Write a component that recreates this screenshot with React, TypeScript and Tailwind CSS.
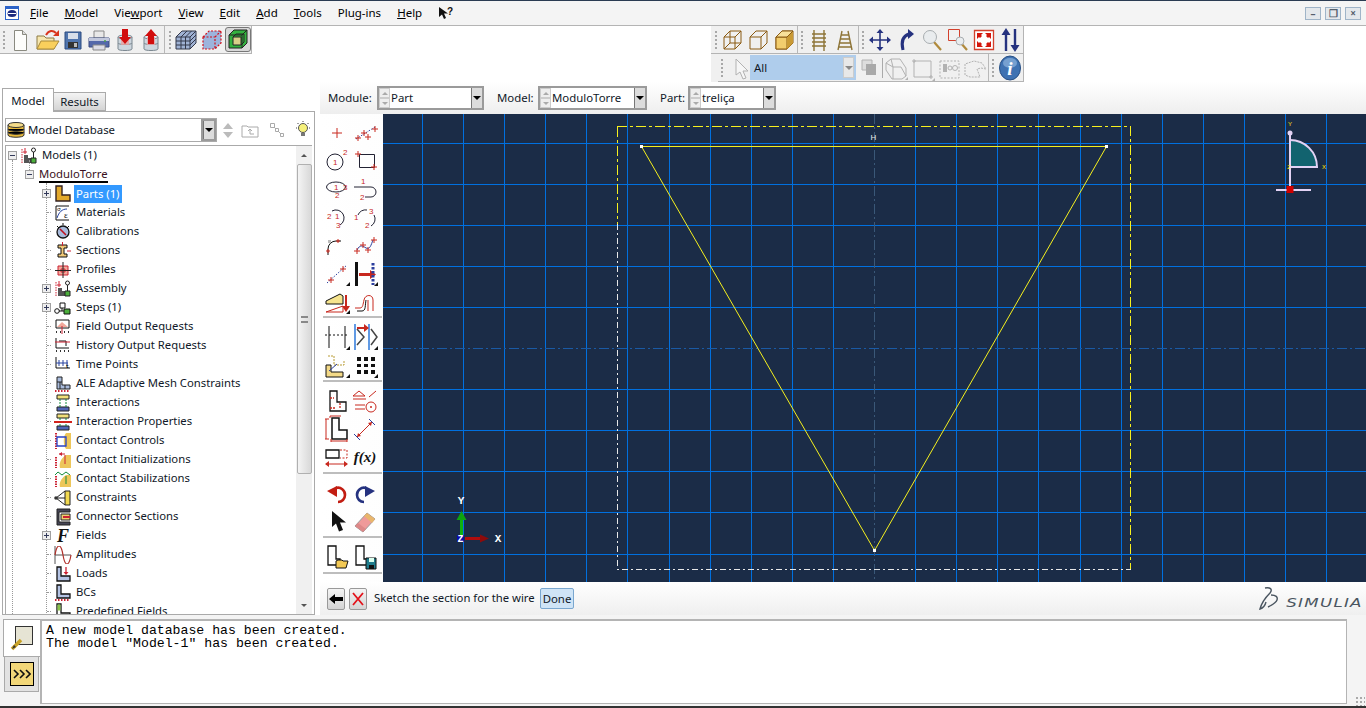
import type { ReactNode } from 'react';

const uiFont = { fontFamily: '"Noto Sans", sans-serif' };

function Ico({ s = 26, children }: { s?: number; children: ReactNode }) {
  return (
    <svg width={s} height={s} viewBox={`0 0 ${s} ${s}`} className="block shrink-0" fill="none">
      {children}
    </svg>
  );
}

function Grip() {
  return <div className="h-[18px] w-0 shrink-0 border-l-[2px] border-dotted border-[#a8a8a8]" />;
}

function Sep() {
  return <div className="h-full w-px shrink-0 bg-[#b8b8b8]" />;
}

function Num({ x, y, t, c = '#c8281e' }: { x: number; y: number; t: string; c?: string }) {
  return (
    <text x={x} y={y} fontSize="8" fill={c} fontFamily="Liberation Sans, sans-serif">
      {t}
    </text>
  );
}

function Plus({ x, y, c = '#c8281e', r = 3 }: { x: number; y: number; c?: string; r?: number }) {
  return <path d={`M${x - r} ${y}h${r * 2}M${x} ${y - r}v${r * 2}`} stroke={c} />;
}

function Corner() {
  return <path d="M27 27h-4l4-4z" fill="#111" />;
}

/* ---------- top toolbar icons ---------- */
const NewFile = () => (
  <Ico>
    <path d="M6.5 3.5h8l4 4v16h-12z" fill="#fdfdfb" stroke="#8a8a80" />
    <path d="M14.5 3.5v4h4" fill="#ddd" stroke="#8a8a80" />
  </Ico>
);
const OpenFile = () => (
  <Ico>
    <path d="M3 22V9h7l2 2h8v11z" fill="#f6e7b0" stroke="#8c7a45" />
    <path d="M3 22l4-8h18l-5 8z" fill="#f9cf5c" stroke="#a98a3a" />
    <path d="M12 8c3-5 7-5 10-2" stroke="#d9351d" strokeWidth="2" />
    <path d="M25 3v6h-6z" fill="#d9351d" />
  </Ico>
);
const SaveFile = () => (
  <Ico>
    <path d="M5 5h16v17H5z" fill="#4f74ad" stroke="#2b4a80" />
    <path d="M8 6h10v6H8z" fill="#d8dfea" />
    <path d="M8 15h10v6H8z" fill="#333" />
    <path d="M14 16h3v4h-3z" fill="#bbb" />
  </Ico>
);
const PrintFile = () => (
  <Ico>
    <path d="M8 4h10v7H8z" fill="#e8e8e8" stroke="#888" />
    <path d="M3 11h20v9H3z" fill="#5468aa" stroke="#3a4a80" />
    <path d="M3 11h20v3H3z" fill="#c2c8dd" />
    <path d="M7 18h12v5H7z" fill="#dcdce6" stroke="#888" />
    <circle cx="19" cy="14" r="1" fill="#4ca04c" />
  </Ico>
);
const DbArrow = ({ up }: { up?: boolean }) => (
  <Ico>
    <path d="M6 10v12c0 2 14 2 14 0V10z" fill="#cdd6de" stroke="#7b8790" />
    <ellipse cx="13" cy="10" rx="7" ry="2" fill="#e4e9ee" stroke="#7b8790" />
    <path d="M6 16c0 2 14 2 14 0" stroke="#7b8790" />
    <path d="M9 10h8v8H9z" fill="#e9a3a3" opacity=".8" />
    {up ? <path d="M13 2l6 7h-3v8h-6V9H7z" fill="#d10d0d" /> : <path d="M10 2h6v8h3l-6 7-6-7h3z" fill="#d10d0d" />}
  </Ico>
);
const MeshCube = () => (
  <Ico>
    <path d="M3 10l6-6h14v12l-6 6H3z" fill="#9fb2d4" stroke="#33384a" />
    <path d="M3 10h14v12M17 10l6-6M8 10v12M12.5 10v12M3 14h14M3 18h14M8 10l6-6M12.5 10l6-6M17 14l6-6M17 18l6-6" stroke="#33384a" />
  </Ico>
);
const RedCube = () => (
  <Ico>
    <path d="M4 10l6-6h12v12l-6 6H4z" fill="#9db4dc" />
    <path d="M4 10l6-6h12v12l-6 6H4zM4 10h12v12M16 10l6-6" stroke="#d3111b" strokeWidth="1.2" strokeDasharray="2 1.5" />
  </Ico>
);
const GreenCube = () => (
  <Ico>
    <path d="M4 9l5-5h13v13l-5 5H4z" fill="#33b13f" stroke="#222" />
    <path d="M8 11h8v8H8z" fill="#d8d089" stroke="#222" />
    <path d="M4 9h13v13M17 9l5-5M8 11l3-3h8v8l-3 3" stroke="#222" />
  </Ico>
);

/* ---------- view toolbar icons ---------- */
const brown = '#8a5a12';
const WireCube = () => (
  <Ico>
    <path d="M5 10l6-6h11v12l-6 6H5zM5 10h11v12M16 10l6-6M11 4v12h11M11 16l-6 6" stroke={brown} />
  </Ico>
);
const HiddenCube = () => (
  <Ico>
    <path d="M5 10l6-6h11v12l-6 6H5zM5 10h11v12M16 10l6-6" stroke={brown} />
  </Ico>
);
const SolidCube = () => (
  <Ico>
    <path d="M5 10l6-6h11v12l-6 6H5z" fill="#f3cd68" stroke={brown} />
    <path d="M5 10h11v12H5z" fill="#f2cd6e" stroke={brown} />
    <path d="M16 10l6-6v12l-6 6z" fill="#c99a35" />
    <path d="M5 10l6-6h11l-6 6z" fill="#f8e09a" stroke={brown} />
  </Ico>
);
const Ladder = ({ tapered }: { tapered?: boolean }) => (
  <Ico>
    {tapered ? (
      <path d="M10 4L6 23M16 4l4 19M9 8h8M8 12h10M7.5 16h11M6 20h14" stroke="#8d7437" strokeWidth="1.4" />
    ) : (
      <path d="M8 3v21M18 3v21M6 7h14M6 11h14M6 15h14M6 19h14" stroke="#8d7437" strokeWidth="1.4" />
    )}
  </Ico>
);
const navy = '#25327f';
const PanIcon = () => (
  <Ico>
    <path d="M13 4v18M4 13h18" stroke={navy} strokeWidth="1.6" />
    <path d="M13 2l3.5 4h-7zM13 24l3.5-4h-7zM2 13l4-3.5v7zM24 13l-4-3.5v7z" fill={navy} />
  </Ico>
);
const RotateIcon = () => (
  <Ico>
    <path d="M10 23C8 15 10 9 16 7" stroke={navy} strokeWidth="3" />
    <path d="M15 2l6 5-6 5z" fill={navy} />
  </Ico>
);
const ZoomIcon = ({ box }: { box?: boolean }) => (
  <Ico>
    {box && <path d="M3.5 2.5h11v11h-11z" stroke="#d3402c" />}
    <path d="M15 15l7 8" stroke="#b08a3c" strokeWidth="2.2" />
    <circle cx={box ? 15 : 11} cy={box ? 14 : 10} r={box ? 4 : 6.5} fill="#e9ecee" stroke="#a8adb0" />
  </Ico>
);
const FitIcon = () => (
  <Ico>
    <path d="M3.5 3.5h19v19h-19z" fill="#fff" stroke="#d3402c" strokeWidth="1.3" />
    <path d="M6 6l6 0-2 2 1 1-2 2-1-1-2 2zM20 6v6l-2-2-1 1-2-2 1-1-2-2zM6 20v-6l2 2 1-1 2 2-1 1 2 2zM20 20h-6l2-2-1-1 2-2 1 1 2-2z" fill="#d4160c" />
  </Ico>
);
const CycleIcon = () => (
  <Ico>
    <path d="M9 6v18M18 2v18" stroke={navy} strokeWidth="2.4" />
    <path d="M9 1l4.5 7h-9zM18 25l-4.5-7h9z" fill={navy} />
  </Ico>
);
const g = '#b2b2b2';
const ArrowGhost = () => (
  <Ico>
    <path d="M8 4v16l4-3 3 7 3-1-3-7h5z" fill="#f6f6f6" stroke={g} />
  </Ico>
);
const GhostLayers = () => (
  <Ico>
    <path d="M6 5h10v10H6z" fill="#ddd" stroke={g} />
    <path d="M10 9h10v11H10z" fill="#a9a9a9" />
  </Ico>
);
const GhostCube = () => (
  <Ico>
    <path d="M3 8l5-4h9l6 9v8l-4 3H9l-6-9z" stroke={g} />
    <path d="M8 4l2 8h8l5 9M10 12l-7-4M10 12v12" stroke={g} />
    <path d="M25 25h-3l3-3z" fill={g} />
  </Ico>
);
const GhostRect = () => (
  <Ico>
    <path d="M5 6h17v16H5z" stroke={g} />
    <path d="M3 6h4M5 4v4M20 22h4M22 20v4" stroke={g} />
    <path d="M26 26h-3l3-3z" fill={g} />
  </Ico>
);
const GhostNodes = () => (
  <Ico>
    <path d="M4 6h19v17H4z" stroke={g} strokeDasharray="2 1.5" />
    <path d="M7 9h4v8H7z" fill={g} />
    <circle cx="14" cy="13" r="2" stroke={g} />
    <circle cx="19" cy="13" r="2.5" stroke={g} />
  </Ico>
);
const GhostHand = () => (
  <Ico>
    <path d="M3 20V9l9-3 8 2 4 6-5-1-4 1 3 8H8z" stroke={g} strokeDasharray="2 1" />
  </Ico>
);
const InfoIcon = () => (
  <Ico>
    <ellipse cx="13" cy="13" rx="10.5" ry="12" fill="#3f72b2" stroke="#274f84" />
    <ellipse cx="13" cy="8" rx="7" ry="5" fill="#8fb4dd" opacity=".7" />
    <text x="13" y="20" textAnchor="middle" fontSize="19" fontStyle="italic" fontWeight="700" fill="#fff" fontFamily="Liberation Serif, serif">
      i
    </text>
  </Ico>
);
const SmallCursor = () => (
  <svg width="16" height="14" viewBox="0 0 16 14" className="block">
    <path d="M1 1v10l3-2.5 2 4.5 2-1-2-4.5h4z" fill="#111" />
    <text x="9" y="9" fontSize="10" fontWeight="700" fill="#111" fontFamily="Liberation Sans, sans-serif">
      ?
    </text>
  </svg>
);

/* ---------- toolbox icons ---------- */
const T = ({ children }: { children: ReactNode }) => <Ico s={28}>{children}</Ico>;
const cr = '#c8281e';
const bk = '#111';
const bl = '#2c3f9e';

const toolbox: ReactNode[][] = [
  [
    <T key="a"><Plus x={14} y={14} r={5} /></T>,
    <T key="b"><path d="M5 20L24 8" stroke={bl} strokeDasharray="1.5 1.5" /><Plus x={7} y={19} /><Plus x={13} y={14} /><Plus x={17} y={18} /><Plus x={24} y={10} /></T>,
    <T key="c"><circle cx="12" cy="15" r="8" stroke="#223" /><Num x={10} y={18} t="1" /><Num x={20} y={8} t="2" /></T>,
    <T key="d"><path d="M8.5 7.5h15v13h-15z" stroke="#223" /><Plus x={7} y={7} /><Plus x={23} y={20} /></T>,
    <T key="e"><ellipse cx="13" cy="12" rx="9.5" ry="5" stroke="#223" /><Num x={11} y={15} t="1" /><Num x={20} y={15} t="3" /><Num x={12} y={23} t="2" /></T>,
    <T key="f"><path d="M3 12h17a5 5 0 0 1 0 10h-6" stroke="#223" /><Num x={10} y={9} t="1" /><Num x={9} y={25} t="2" /></T>,
    <T key="g"><path d="M9 8a8 8 0 1 1 8 14" stroke="#223" /><Num x={4} y={16} t="2" /><Num x={12} y={16} t="1" /><Num x={13} y={25} t="3" /></T>,
    <T key="h"><path d="M7 12a8 8 0 0 1 9-5M23 12a8 8 0 0 1-3 11" stroke="#223" /><Num x={3} y={17} t="1" /><Num x={18} y={11} t="3" /><Num x={14} y={25} t="2" /></T>,
    <T key="i"><path d="M5 24v-6a8 8 0 0 1 8-8h5" stroke={bk} /><path d="M5 9h3v3H5z" fill="#bbb" /><Plus x={15} y={10} r={2} /><Plus x={5} y={20} r={2} /></T>,
    <T key="j"><path d="M6 19c3-6 6-4 9-2 4 2 5-3 7-8" stroke={bl} /><Plus x={6} y={20} /><Plus x={12} y={14} /><Plus x={17} y={19} /><Plus x={23} y={9} /></T>,
    <T key="k"><path d="M4 24L24 6" stroke={bl} strokeDasharray="1.5 1.5" /><Plus x={8} y={21} /><Plus x={20} y={10} /><Corner /></T>,
    <T key="l"><path d="M4 3h3v24H4z" fill={bk} /><path d="M8 15h11v-3l6 4.5-6 4.5v-3H8z" transform="translate(0 -1)" fill={cr} /><path d="M22 4v22" stroke={bl} strokeWidth="3" strokeDasharray="2.5 1.5" /><Corner /></T>,
    <T key="m"><path d="M3 14l14-7 3 2v8H3z" fill="#f6e48e" stroke={bk} /><path d="M3 25l17-6v6z" stroke={cr} /><path d="M23 8v14" stroke={cr} strokeWidth="2" /><path d="M19 19h8l-4 6z" fill={cr} /><Corner /></T>,
    <T key="n"><path d="M4 21h5c3 0 3-4 4-8 1-6 9-6 9 0v11M17 13v11" stroke={cr} /><path d="M6 24h5c4 0 3-6 4-11" stroke={bk} /></T>,
  ],
  [
    <T key="a"><path d="M2 12h24" stroke={bk} strokeDasharray="2 2" /><path d="M6 3v22M22 3v22" stroke={bk} /><Corner /></T>,
    <T key="b"><path d="M4 1v26M18 1v26" stroke="#1e6fd9" strokeWidth="1.4" /><path d="M6 6l7 8-7 8M20 6l6 8-6 8" stroke="#444" strokeWidth="1.5" /><path d="M6 4h7V1l5 4-5 4V6H6z" fill={cr} /><Corner /></T>,
    <T key="c"><path d="M5 5h6v9h10v-5" stroke="#b89b35" strokeDasharray="2 1" /><path d="M3 14h5v7h12v5H3z" fill="#f3d987" stroke={bk} /><path d="M6 20l8-7" stroke={bl} /><Corner /></T>,
    <T key="d"><path d="M6 6h4v4H6zM13 6h4v4h-4zM20 6h4v4h-4zM6 13h4v3H6zM13 13h4v3h-4zM20 13h4v3h-4zM6 19h4v4H6zM13 19h4v4h-4zM20 19h4v4h-4z" fill={bk} /><Corner /></T>,
  ],
  [
    <T key="a"><path d="M7 4h7v11h9v9H7z" stroke={bk} strokeWidth="1.3" /><path d="M7 11h4M7 21h5M17 21v-6" stroke={cr} strokeWidth="1.3" strokeDasharray="2 1" /></T>,
    <T key="b"><path d="M2 9l6-5 6 5z" stroke={cr} /><path d="M2 12h13M4 18h10M4 22h10" stroke={cr} /><circle cx="20" cy="20" r="5" stroke={cr} /><circle cx="20" cy="20" r="1" fill={cr} /><path d="M18 10l7-6" stroke={cr} /></T>,
    <T key="c"><path d="M9 3h7v12h8v9H9z" stroke={bk} strokeWidth="1.5" /><path d="M3 4v20M7 1v2M2 4h4M2 24h4M8 26h16M8 24v3M24 24v3M7 1h11" stroke={cr} /></T>,
    <T key="d"><path d="M6 22L21 7" stroke={cr} /><path d="M3 19l6 6M18 4l6 6" stroke={bl} /><path d="M6 22l1-4 3 3zM21 7l-1 4-3-3z" fill={cr} /></T>,
    <T key="e"><path d="M3 7h13v8H3z" stroke={bk} strokeWidth="1.3" /><path d="M17 7h7v8h-7" stroke={cr} strokeDasharray="2 1.5" /><path d="M3 21h21" stroke={cr} /><path d="M2 21l4-3v6zM25 21l-4-3v6z" fill={cr} /></T>,
    <T key="f"><text x="14" y="19" textAnchor="middle" fontSize="15" fontStyle="italic" fontWeight="700" fill={bk} fontFamily="Liberation Serif, serif">f(x)</text></T>,
  ],
  [
    <T key="a"><path d="M13 9a7 7 0 0 1 9 7c0 4-3 7-7 7" stroke="#c21d12" strokeWidth="2.6" /><path d="M4 12l10-5v11z" fill="#c21d12" /></T>,
    <T key="b"><path d="M15 9a7 7 0 0 0-9 7c0 4 3 7 7 7" stroke={navy} strokeWidth="2.6" /><path d="M24 12L14 7v11z" fill={navy} /></T>,
    <T key="c"><path d="M9 4v16l4-3.5 3 8 4-1.5-3-7.5h6z" fill={bk} /></T>,
    <T key="d"><path d="M4 19L16 6l8 6-12 13z" fill="#ef9a9a" stroke="#999" /><path d="M13 9l3-3 8 6-3 4z" fill="#e9b66c" /><path d="M4 19l8 6 3-3-8-6z" fill="#d88" /></T>,
  ],
  [
    <T key="a"><path d="M5 3h8v13h4v6H5z" stroke={bk} strokeWidth="1.3" fill="#fff" /><path d="M13 25v-7l2-1h4l1 1h5l-2 7z" fill="#f3c955" stroke={bk} /></T>,
    <T key="b"><path d="M5 3h8v13h4v6H5z" stroke={bk} strokeWidth="1.3" fill="#fff" /><path d="M15 15h10v11H15z" fill="#1f7c8c" stroke={bk} /><path d="M18 15h5v4h-5z" fill="#dfe" /><path d="M18 22h5v4h-5z" fill="#111" /></T>,
  ],
  [
    <T key="a"><path d="M7 6h7v14h8" stroke={bk} strokeWidth="1.3" /></T>,
    <T key="b"><path d="M5 7h20M5 7v12h20V7M10 7v12M15 7v12M20 7v12" stroke={bl} /></T>,
  ],
];

/* ---------- tree icons ---------- */
const I = ({ children }: { children: ReactNode }) => (
  <svg width="18" height="18" viewBox="0 0 18 18" className="block shrink-0" fill="none">
    {children}
  </svg>
);
const Hatch = () => <path d="M1 16h14" stroke="#c23" strokeWidth="2" strokeDasharray="1.5 1.5" />;
const ModelIco = () => (
  <I>
    <path d="M2 2v14" stroke="#c23" strokeDasharray="1.5 1" />
    <path d="M4 8h4v8H4zM8 11h3v5H8z" fill="#555" />
    <path d="M11 11h5v5h-5z" fill="#4caf3c" stroke="#222" />
    <circle cx="13.5" cy="3" r="2" fill="#fff" stroke="#222" />
    <path d="M13.5 5v6" stroke="#222" />
    <path d="M5 1v6M3 5h4" stroke="#c23" />
  </I>
);
const treeIcons: Record<string, ReactNode> = {
  Models: <ModelIco />,
  Parts: <I><path d="M2 1h6v9h8v6H2z" fill="#e3a92c" stroke="#322" strokeWidth="1.4" /></I>,
  Materials: <I><path d="M2 2h13M2 2v14h13" stroke="#111" /><path d="M3 14C5 8 8 5 13 5" stroke="#2743a0" /><text x="10" y="14" fontSize="9" fill="#111" fontFamily="Liberation Serif, serif">ε</text><text x="3" y="7" fontSize="6" fill="#111">σ</text></I>,
  Calibrations: <I><circle cx="9" cy="9" r="6" fill="#a9bbdc" stroke="#111" strokeWidth="1.3" /><path d="M6 6l6 6" stroke="#c1121f" strokeWidth="1.6" /><path d="M3 3l2 2M15 3l-2 2M9 0v2" stroke="#111" /></I>,
  Sections: <I><path d="M4 3h9v3h-3v6h3v3H4v-3h3V6H4z" fill="#f0c878" stroke="#111" /><path d="M8.5 0v4M13 9h4" stroke="#c23" /></I>,
  Profiles: <I><path d="M4 5h10v9H4z" fill="#f2a99c" stroke="#c23" /><path d="M7 8h4v3H7z" stroke="#c23" /><path d="M9 1v16M1 9.5h16" stroke="#222" /></I>,
  Assembly: <ModelIco />,
  Steps: <I><circle cx="3" cy="12" r="2.3" fill="#fff" stroke="#111" /><path d="M5 12h5" stroke="#111" /><path d="M6 4h5v5H6z" fill="#fff" stroke="#111" /><path d="M10 10h6v5h-6z" fill="#4caf3c" stroke="#111" /><path d="M8 9v3" stroke="#111" /></I>,
  Field: <I><path d="M2 2h13v8H2z" stroke="#111" /><path d="M3 9l5-5 6 5z" fill="#f2a99c" /><path d="M2 14h2M6 14h2M10 14h2M14 14h2" stroke="#333" strokeWidth="2" strokeDasharray="1 1" /><path d="M8 8v8" stroke="#c23" /></I>,
  History: <I><path d="M2 1v10h13" stroke="#111" /><path d="M5 4h7v5" stroke="#111" /><path d="M1 5h15" stroke="#c23" /><path d="M2 14h2M6 14h2M10 14h2M14 14h2" stroke="#333" strokeWidth="2" strokeDasharray="1 1" /></I>,
  Time: <I><path d="M2 1v11h14" stroke="#111" /><path d="M2 7h12M5 4v6M9 4v6M13 4v6" stroke="#2743a0" /><text x="12" y="12" fontSize="6" fontWeight="700" fill="#111">t</text></I>,
  ALE: <I><path d="M3 2h5v8h8v4H3z" fill="#a9bbdc" stroke="#222" /><path d="M6 7v7M11 10v4M3 7h5" stroke="#222" /><Hatch /></I>,
  Interactions: <I><path d="M3 1h12v4H3z" fill="#f2e07a" stroke="#222" /><path d="M3 13h12v4H3z" fill="#5066b4" stroke="#222" /><path d="M6 5v8M12 5v8" stroke="#138a3a" strokeDasharray="2 1" /></I>,
  InteractionP: <I><path d="M3 1h12v4H3z" fill="#f2e07a" stroke="#222" /><path d="M3 13h12v4H3z" fill="#5066b4" stroke="#222" /><path d="M6 5v8M12 5v8" stroke="#138a3a" strokeDasharray="2 1" /><path d="M0 9h18" stroke="#d2231c" strokeWidth="2" /></I>,
  Controls: <I><path d="M2 1v16" stroke="#c23" strokeWidth="2" strokeDasharray="1.5 1" /><path d="M12 1c-3 3-3 13 0 16h5V1z" fill="#edc65a" /><path d="M3 5h9v9H3z" stroke="#2743c8" strokeWidth="1.3" /></I>,
  Init: <I><path d="M2 6v11" stroke="#c23" strokeWidth="2" strokeDasharray="1.5 1" /><path d="M12 4c-6 4-7 9-6 13h11V4z" fill="#edc65a" /><path d="M11 4v9M11 3H5" stroke="#c23" /><path d="M5 3l3-2v4z" fill="#c23" /></I>,
  Stab: <I><path d="M2 6v11" stroke="#c23" strokeWidth="2" strokeDasharray="1.5 1" /><path d="M12 5c-6 4-7 9-6 12h11V5z" fill="#edc65a" /><path d="M1 5l3-3 4 3 4-3 4 3" stroke="#138a3a" /><path d="M12 6v8" stroke="#138a3a" /></I>,
  Constraints: <I><path d="M11 2h5v14h-5z" fill="#f2d94f" stroke="#222" /><path d="M2 9l9-7M2 9l9 7M2 9h9" stroke="#222" /><circle cx="2" cy="9" r="1.8" fill="#333" /></I>,
  Connector: <I><path d="M3 1h13v3H5v10h11v3H3z" fill="#445" stroke="#222" /><path d="M7 6h9v6H7z" fill="#f0d070" stroke="#222" /><path d="M9 8h7v2H9z" fill="#c23" /></I>,
  Fields: <I><text x="9" y="15" textAnchor="middle" fontSize="18" fontStyle="italic" fontWeight="700" fill="#111" fontFamily="Liberation Serif, serif">F</text></I>,
  Amplitudes: <I><path d="M1 0v18M1 9h16" stroke="#555" /><path d="M1 9c2-12 6-12 8 0s6 12 8 0" stroke="#b0302a" strokeWidth="1.2" /></I>,
  Loads: <I><path d="M3 2h4v9h9v5H3z" fill="#b4c3e4" stroke="#111" strokeWidth="1.3" /><path d="M12 2v7" stroke="#c23" strokeWidth="1.3" /><path d="M9.5 7h5L12 10z" fill="#c23" /></I>,
  BCs: <I><path d="M3 1h4v9h9v4H3z" fill="#b4c3e4" stroke="#111" strokeWidth="1.3" /><Hatch /></I>,
  Predefined: <I><path d="M3 1h4v9h9v4H3z" fill="#fff" stroke="#111" strokeWidth="1.3" /><path d="M3.5 1.5h3v6h-3z" fill="#8bc34a" /></I>,
};

const rows: [string, string, boolean?][] = [
  ['Materials', 'Materials'],
  ['Calibrations', 'Calibrations'],
  ['Sections', 'Sections'],
  ['Profiles', 'Profiles'],
  ['Assembly', 'Assembly', true],
  ['Steps', 'Steps (1)', true],
  ['Field', 'Field Output Requests'],
  ['History', 'History Output Requests'],
  ['Time', 'Time Points'],
  ['ALE', 'ALE Adaptive Mesh Constraints'],
  ['Interactions', 'Interactions'],
  ['InteractionP', 'Interaction Properties'],
  ['Controls', 'Contact Controls'],
  ['Init', 'Contact Initializations'],
  ['Stab', 'Contact Stabilizations'],
  ['Constraints', 'Constraints'],
  ['Connector', 'Connector Sections'],
  ['Fields', 'Fields', true],
  ['Amplitudes', 'Amplitudes'],
  ['Loads', 'Loads'],
  ['BCs', 'BCs'],
  ['Predefined', 'Predefined Fields'],
];

function Expander({ open }: { open?: boolean }) {
  return (
    <div className="relative z-10 flex h-[9px] w-[9px] shrink-0 items-center justify-center border border-[#a0a0a0] bg-[#eeeeee]">
      <div className="absolute h-px w-[5px] bg-[#333a5a]" />
      {!open && <div className="absolute h-[5px] w-px bg-[#333a5a]" />}
    </div>
  );
}

function Tree() {
  return (
    <div className="relative h-[468px] flex-1 overflow-hidden text-[11.3px] text-[#101828]">
      <div className="absolute left-[6px] top-[14px] h-[460px] border-l border-dotted border-[#999]" />
      <div className="absolute left-[23px] top-[14px] h-[10px] border-l border-dotted border-[#999]" />
      <div className="absolute left-[40px] top-[37px] h-[430px] border-l border-dotted border-[#999]" />

      <div className="flex h-[19px] items-center pl-[2px]">
        <Expander open />
        <div className="ml-[3px]"><ModelIco /></div>
        <span className="ml-[4px]">Models (1)</span>
      </div>
      <div className="flex h-[19px] items-center pl-[19px]">
        <Expander open />
        <span className="ml-[5px] border-b-2 border-black leading-[15px] text-[#3a1020]">ModuloTorre</span>
      </div>
      <div className="flex h-[19px] items-center pl-[36px]">
        <Expander />
        <div className="ml-[3px]">{treeIcons.Parts}</div>
        <span className="ml-[2px] bg-[#3399ff] px-[2px] leading-[18px] text-white">Parts (1)</span>
      </div>
      {rows.map(([icon, label, exp]) => (
        <div key={icon} className="relative flex h-[19px] items-center pl-[36px]">
          {exp ? <Expander /> : <div className="ml-[5px] w-[4px] shrink-0 border-t border-dotted border-[#999]" />}
          <div className="ml-[3px]">{treeIcons[icon]}</div>
          <span className="ml-[4px] whitespace-nowrap">{label}</span>
        </div>
      ))}
    </div>
  );
}

function DropBtn() {
  return (
    <div className="flex w-[11px] shrink-0 items-center justify-center border-l border-[#777] bg-[#dcdcdc] py-px">
      <div className="h-0 w-0 border-x-[4px] border-t-[4px] border-x-transparent border-t-black" />
    </div>
  );
}

function Combo({ label, value, labelW, w }: { label: string; value: string; labelW: string; w: string }) {
  return (
    <div className="flex items-center gap-[4px]">
      <span className={`${labelW} text-[11.4px] text-[#101828]`}>{label}</span>
      <div className={`flex h-[24px] ${w} border-2 border-[#9a9a9a] bg-white`}>
        <div className="flex w-[11px] shrink-0 flex-col">
          <div className="flex flex-1 items-center justify-center border border-[#ccc] bg-[#eee]">
            <div className="h-0 w-0 border-x-[3px] border-b-[3px] border-x-transparent border-b-[#aaa]" />
          </div>
          <div className="flex flex-1 items-center justify-center border border-[#ccc] bg-[#eee]">
            <div className="h-0 w-0 border-x-[3px] border-t-[3px] border-x-transparent border-t-[#aaa]" />
          </div>
        </div>
        <span className="flex-1 pl-px text-[11.4px] leading-[20px] text-[#101828]">{value}</span>
        <DropBtn />
      </div>
    </div>
  );
}

function Viewport() {
  const vs: number[] = [];
  const hs: number[] = [];
  for (let n = -11; n <= 11; n++) if (n !== 0) vs.push(491 + n * 41.1);
  for (let n = -5; n <= 5; n++) if (n !== 0) hs.push(234 + n * 41.1);
  return (
    <svg width="983" height="468" viewBox="0 0 983 468" className="block" style={{ shapeRendering: 'crispEdges' }}>
      <rect width="983" height="468" fill="#1b2c47" />
      {vs.map(x => (
        <line key={x} x1={Math.round(x) + 0.5} y1="0" x2={Math.round(x) + 0.5} y2="468" stroke="#0070e0" />
      ))}
      {hs.map(y => (
        <line key={y} x1="0" y1={Math.round(y) + 0.5} x2="983" y2={Math.round(y) + 0.5} stroke="#0070e0" />
      ))}
      <line x1="491.5" y1="0" x2="491.5" y2="468" stroke="#3a5878" strokeDasharray="10 3 2 3" />
      <line x1="0" y1="234.5" x2="983" y2="234.5" stroke="#1a5aa5" strokeDasharray="10 3 2 3" />

      <path d="M234 12.5H747.5V455" stroke="#f7f01e" strokeDasharray="10 3 3 3" fill="none" />
      <path d="M234.5 13V110" stroke="#f7f01e" strokeDasharray="10 3 3 3" fill="none" />
      <path d="M234.5 110V455.5H747.5" stroke="#e8e8e8" strokeDasharray="6 3 2 3" fill="none" />

      <path d="M258.5 32.5H723.5" stroke="#f5f01e" fill="none" />
      <g style={{ shapeRendering: 'auto' }}>
        <path d="M258.5 32.5L491.5 436.5L723.5 32.5" stroke="#f5f01e" fill="none" />
        <rect x="257" y="31" width="3" height="3" fill="#fff" />
        <rect x="722" y="31" width="3" height="3" fill="#fff" />
        <rect x="490" y="435" width="3" height="3" fill="#fff" />
        <text x="490.5" y="26" textAnchor="middle" fontSize="8" fill="#e8e8e8" fontFamily="Liberation Sans, sans-serif">H</text>

        {/* global triad */}
        <path d="M78.5 404v19" stroke="#10b010" strokeWidth="3" />
        <path d="M78.5 397l5 9h-10z" fill="#0ea30e" />
        <path d="M82 424.5h17" stroke="#b00d0d" strokeWidth="3" />
        <path d="M106 424.5l-9-4v8z" fill="#8c0b0b" />
        <rect x="74" y="421" width="7" height="7" fill="#0a0aa8" />
        <text x="78" y="390" textAnchor="middle" fontSize="11" fontWeight="700" fill="#fff" fontFamily="Liberation Mono, monospace">Y</text>
        <text x="77.5" y="428" textAnchor="middle" fontSize="10" fontWeight="700" fill="#fff" fontFamily="Liberation Mono, monospace">Z</text>
        <text x="115" y="428" textAnchor="middle" fontSize="11" fontWeight="700" fill="#fff" fontFamily="Liberation Mono, monospace">X</text>

        {/* sketch plane triad */}
        <path d="M907 26V53H934A27 27 0 0 0 907 26Z" fill="#12636f" />
        <path d="M907 26A27 27 0 0 1 934 53H907" stroke="#e3d3f5" strokeWidth="2" fill="none" />
        <circle cx="907" cy="19" r="2.5" fill="#e3d3f5" />
        <path d="M907 18V75" stroke="#e3d3f5" strokeWidth="2" />
        <path d="M893 76h35" stroke="#e3d3f5" strokeWidth="2" />
        <rect x="903.5" y="72" width="7" height="7" fill="#d00000" />
        <text x="907" y="12" textAnchor="middle" fontSize="6" fill="#ffe60a" fontFamily="Liberation Sans, sans-serif">Y</text>
        <text x="941" y="55" textAnchor="middle" fontSize="6" fill="#ffe60a" fontFamily="Liberation Sans, sans-serif">X</text>
        <text x="906" y="55" textAnchor="middle" fontSize="6" fill="#ffe60a" fontFamily="Liberation Sans, sans-serif">Z</text>
      </g>
    </svg>
  );
}

export default function App() {
  return (
    <div className="flex h-[708px] w-[1366px] flex-col overflow-hidden border-t border-[#2a3b52] bg-white" style={uiFont}>
      {/* menu */}
      <div className="flex h-[25px] shrink-0 items-center border-b border-[#b4b4b4] bg-[#f4f4f4] text-[11.5px] text-black">
        <svg width="14" height="14" viewBox="0 0 14 14" className="ml-[5px] shrink-0">
          <rect x="0.5" y="0.5" width="13" height="13" fill="#fff" stroke="#2b62c8" />
          <rect x="1" y="1" width="12" height="2" fill="#2b62c8" />
          <ellipse cx="7" cy="7.5" rx="4.5" ry="3.5" fill="#1c2a80" />
          <path d="M3 7.5h8" stroke="#fff" />
        </svg>
        <div className="ml-[11px] flex items-center gap-4">
          <span><u>F</u>ile</span>
          <span><u>M</u>odel</span>
          <span>Vie<u>w</u>port</span>
          <span><u>V</u>iew</span>
          <span><u>E</u>dit</span>
          <span><u>A</u>dd</span>
          <span><u>T</u>ools</span>
          <span>Plu<u>g</u>-ins</span>
          <span><u>H</u>elp</span>
          <SmallCursor />
        </div>
        <div className="ml-auto mr-[5px] flex gap-[4px]">
          {['–', '❐', '×'].map(c => (
            <div key={c} className="flex h-[13px] w-[16px] items-center justify-center border border-[#9fb4c8] bg-[#e4e8ec] text-[10px] font-bold leading-none text-[#55606c]">
              {c}
            </div>
          ))}
        </div>
      </div>

      {/* toolbars */}
      <div className="flex h-[56px] shrink-0 justify-between bg-white">
        <div className="flex h-[28px] items-center border-b border-r border-[#b4b4b4] bg-[#f0f0f0] pl-[3px]">
          <Grip />
          <div className="ml-[3px] flex">
            <NewFile /><OpenFile /><SaveFile /><PrintFile /><DbArrow /><DbArrow up />
          </div>
          <div className="mr-[4px] h-full"><Sep /></div>
          <Grip />
          <div className="ml-[2px] flex">
            <MeshCube /><RedCube />
            <div className="flex h-[25px] w-[26px] items-center justify-center rounded-[3px] border border-[#777] bg-[#d8d8d8]"><GreenCube /></div>
          </div>
        </div>
        <div className="mr-[342px] flex w-[313px] flex-col items-end bg-[#f0f0f0]">
          <div className="flex h-[28px] w-full items-center border-b border-r border-[#b4b4b4] pl-[4px]">
            <Grip />
            <div className="ml-[2px] flex"><WireCube /><HiddenCube /><SolidCube /></div>
            <div className="mr-[3px] h-full"><Sep /></div>
            <Grip />
            <div className="ml-[3px] flex"><Ladder /><Ladder tapered /></div>
            <div className="mr-[3px] h-full"><Sep /></div>
            <Grip />
            <div className="ml-[3px] flex"><PanIcon /><RotateIcon /><ZoomIcon /><ZoomIcon box /><FitIcon /><CycleIcon /></div>
          </div>
          <div className="flex h-[28px] w-[306px] items-center border-b border-r border-[#b4b4b4] pl-[3px]">
            <Grip />
            <div className="ml-[5px]"><ArrowGhost /></div>
            <div className="ml-[-4px] flex h-[25px] w-[106px] shrink-0 items-center justify-between bg-[#afcdec] pl-[4px] pr-[2px] text-[11.4px] text-[#101828]">
              All
              <div className="flex h-[21px] w-[11px] items-center justify-center border border-[#ccc] bg-[#e8e8e8]">
                <div className="h-0 w-0 border-x-[4px] border-t-[4px] border-x-transparent border-t-[#888]" />
              </div>
            </div>
            <GhostLayers />
            <div className="h-[20px] w-px shrink-0 bg-[#aaa]" />
            <GhostCube /><GhostRect />
            <div className="ml-[1px]"><GhostNodes /></div>
            <GhostHand />
            <div className="h-full"><Sep /></div>
            <div className="ml-[3px]"><Grip /></div>
            <div className="ml-[3px]"><InfoIcon /></div>
          </div>
        </div>
      </div>

      {/* main */}
      <div className="flex h-[533px] shrink-0">
        {/* left pane */}
        <div className="w-[320px] shrink-0 bg-white pl-[2px] pt-[6px]">
          <div className="flex h-[23px] items-end text-[11.4px] text-[#101828]">
            <div className="z-10 mb-[-1px] flex h-[24px] w-[52px] items-center justify-center border border-b-0 border-[#aaa] bg-white">Model</div>
            <div className="flex h-[19px] w-[52px] items-center justify-center border border-l-0 border-[#aaa] bg-gradient-to-b from-[#f4f4f4] to-[#d4d4d4]">Results</div>
          </div>
          <div className="w-[313px] border border-[#aaa] bg-white px-[2px] pt-[6px]">
            <div className="flex h-[24px] items-center">
              <div className="flex h-[24px] w-[213px] items-center border border-[#aaa] bg-white pl-px text-[11.4px] text-[#101828]">
                <svg width="18" height="16" viewBox="0 0 18 16" className="shrink-0">
                  <path d="M1 3v10c0 3 16 3 16 0V3z" fill="#e8b93a" stroke="#333" />
                  <ellipse cx="9" cy="3" rx="8" ry="2.5" fill="#f5dc8a" stroke="#333" />
                  <path d="M1 7c0 3 16 3 16 0M1 10c0 3 16 3 16 0" stroke="#333" />
                </svg>
                <span className="ml-[3px] flex-1">Model Database</span>
                <div className="flex h-full border-2 border-[#9a9a9a]"><DropBtn /></div>
              </div>
              <div className="ml-[5px] flex h-full w-[12px] flex-col items-center justify-center gap-[3px]">
                <div className="h-0 w-0 border-x-[5px] border-b-[6px] border-x-transparent border-b-[#bbb]" />
                <div className="h-0 w-0 border-x-[5px] border-t-[6px] border-x-transparent border-t-[#bbb]" />
              </div>
              <svg width="18" height="16" viewBox="0 0 18 16" className="ml-[7px] shrink-0" fill="none">
                <path d="M1 4h5l1 1h10v10H1z" stroke="#aaa" />
                <path d="M9 7v5h4M9 7l-2 2M9 7l2 2" stroke="#aaa" />
              </svg>
              <svg width="16" height="16" viewBox="0 0 16 16" className="ml-[10px] shrink-0" fill="none" stroke="#aaa">
                <path d="M1.5 1.5h4v4h-4zM6.5 6.5h3v3h-3zM11.5 11.5h3v3h-3zM5 5l2 2M9 9l3 3" />
              </svg>
              <svg width="18" height="18" viewBox="0 0 18 18" className="ml-[9px] shrink-0" fill="none">
                <circle cx="9" cy="7" r="4.5" fill="#f5f07a" stroke="#555" />
                <path d="M7 12h4v3H7z" fill="#777" />
                <path d="M9 0v1M2 7h1M15 7h1M3.5 2l1 1M14.5 2l-1 1" stroke="#444" />
              </svg>
            </div>
            <div className="mt-[3px] flex h-[469px] border border-[#aaa] border-b-0 border-r-0">
              <Tree />
              <div className="flex w-[16px] shrink-0 flex-col items-center bg-[#f0f0f0]">
                <div className="flex h-[18px] w-full items-center justify-center">
                  <div className="h-0 w-0 border-x-[3px] border-b-[3px] border-x-transparent border-b-[#555]" />
                </div>
                <div className="flex h-[310px] w-[15px] items-center justify-center rounded-[2px] border border-[#b0b0b0] bg-gradient-to-r from-[#f4f4f4] to-[#d8d8d8]">
                  <div className="h-[7px] w-[7px] border-y-2 border-[#888]" />
                </div>
                <div className="mt-auto flex h-[18px] w-full items-center justify-center">
                  <div className="h-0 w-0 border-x-[3px] border-t-[3px] border-x-transparent border-t-[#555]" />
                </div>
              </div>
            </div>
          </div>
        </div>

        {/* right pane */}
        <div className="flex min-w-0 flex-1 flex-col">
          <div className="flex h-[32px] shrink-0 items-center gap-[13px] bg-gradient-to-b from-white to-[#eeeeee] pl-[8px]">
            <Combo label="Module:" value="Part" labelW="w-[45px]" w="w-[107px]" />
            <Combo label="Model:" value="ModuloTorre" labelW="w-[37px]" w="w-[109px]" />
            <Combo label="Part:" value="treliça" labelW="w-[24px]" w="w-[88px]" />
          </div>
          <div className="flex h-[468px] shrink-0 bg-gradient-to-r from-white to-[#e8e8e8]">
            <div className="h-[468px] w-[63px] shrink-0 overflow-hidden pl-[3px] pt-[5px]">
              {toolbox.map((group, i) => (
                <div key={i} className={i === 0 ? 'w-[59px]' : 'mt-[1px] w-[59px] border-t-2 border-[#bdbdbd] pt-[5px]'}>
                  <div className="grid grid-cols-[28px_28px] gap-x-0">{group}</div>
                </div>
              ))}
            </div>
            <Viewport />
          </div>
          <div className="flex h-[33px] shrink-0 items-center bg-gradient-to-b from-white to-[#efefef] pl-[7px]">
            <div className="flex h-[22px] w-[18px] items-center justify-center rounded-[2px] border border-[#999] bg-gradient-to-b from-[#f4f4f4] to-[#d4d4d4]">
              <svg width="14" height="12" viewBox="0 0 14 12"><path d="M0 6l6-5v3h8v4H6v3z" fill="#000" /></svg>
            </div>
            <div className="ml-[4px] flex h-[22px] w-[18px] items-center justify-center rounded-[2px] border border-[#999] bg-gradient-to-b from-[#f4f4f4] to-[#d4d4d4]">
              <svg width="14" height="14" viewBox="0 0 14 14"><path d="M2 1l10 12M12 1L2 13" stroke="#e3121a" strokeWidth="1.8" /></svg>
            </div>
            <span className="ml-[7px] w-[160px] whitespace-nowrap text-[11.3px] text-[#101828]">Sketch the section for the wire</span>
            <div className="ml-[6px] flex h-[21px] w-[34px] items-center justify-center rounded-[2px] border border-[#7aa7cf] bg-[#cfe4f6] text-[11.4px] text-[#101828]">Done</div>
            <div className="ml-auto mr-[3px] flex items-center">
              <svg width="24" height="24" viewBox="0 0 24 24" fill="none" stroke="#4a5560" strokeWidth="1.4" className="mr-[21px]">
                <path d="M7 1c5-1 8 1 5 5-3 3-8 8-10 16 3-1 5-3 6-7M13 8c5 0 7 2 6 5s-5 5-9 7" />
              </svg>
              <span className="mt-[8px] origin-right scale-x-[1.28] text-[13px] italic tracking-[1px] text-[#4a5560]" style={{ fontFamily: '"DejaVu Sans", sans-serif' }}>SIMULIA</span>
            </div>
          </div>
        </div>
      </div>

      {/* message area */}
      <div className="relative flex min-h-0 flex-1 bg-[#f4f4f4] pl-[3px] pt-[4px]">
        <div className="w-[37px] shrink-0">
          <div className="flex h-[38px] items-center justify-center border border-r-0 border-[#aaa] bg-white">
            <svg width="24" height="26" viewBox="0 0 24 26" fill="none">
              <rect x="5.5" y="1.5" width="17" height="18" fill="#e6e4d4" stroke="#333" />
              <path d="M2 24l9-9" stroke="#c9a227" strokeWidth="3.5" />
              <path d="M2 24l2-4 2 2z" fill="#333" />
            </svg>
          </div>
          <div className="ml-[1px] flex h-[35px] w-[35px] items-center justify-center border border-t-0 border-[#aaa] bg-[#e2e2e2]">
            <div className="flex h-[24px] w-[24px] items-center justify-center border border-black bg-[#f2d779]">
              <svg width="18" height="10" viewBox="0 0 18 10" fill="none" stroke="#111" strokeWidth="1.6">
                <path d="M1 1l4 4-4 4M7 1l4 4-4 4M13 1l4 4-4 4" />
              </svg>
            </div>
          </div>
        </div>
        <div className="h-[85px] w-[1307px] border-2 border-b border-r border-[#b4b4b4] bg-white pl-[4px] pt-[3px] text-[13.2px] leading-[13px] text-black" style={{ fontFamily: '"Liberation Mono", monospace' }}>
          <div>A new model database has been created.</div>
          <div>The model "Model-1" has been created.</div>
        </div>
        <div className="absolute bottom-[2px] right-[1px] h-[10px] w-[10px] bg-[radial-gradient(#aaa_1px,transparent_1px)] bg-[length:4px_4px]" />
        <div className="absolute bottom-0 left-0 h-[2px] w-full bg-[#333]" />
      </div>
    </div>
  );
}
